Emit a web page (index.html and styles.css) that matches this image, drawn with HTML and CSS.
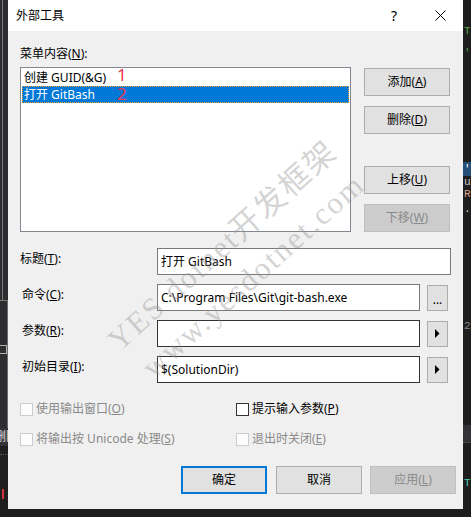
FILE: index.html
```html
<!DOCTYPE html>
<html lang="zh-CN">
<head>
<meta charset="utf-8">
<title>外部工具</title>
<link rel="stylesheet" href="styles.css">
</head>
<body>
<div class="screen">
  <div class="edge-left">
    <div class="el-top"><div class="el-line"></div></div>
    <div class="el-mid"><div class="el-hline"></div><div class="el-box"></div></div>
    <div class="el-label">删除</div>
    <div class="el-bottom"><div class="el-dots"></div><div class="el-red"></div></div>
  </div>

  <div class="dialog">
    <div class="titlebar">
      <span class="title">外部工具</span>
      <span class="help">?</span>
      <span class="close">
        <svg width="11" height="11" viewBox="0 0 11 11"><path d="M0.5 0.5 L10.5 10.5 M10.5 0.5 L0.5 10.5" stroke="#000" stroke-width="1" fill="none"/></svg>
      </span>
    </div>

    <div class="content">
      <div class="label-top">菜单内容(<u>N</u>):</div>

      <div class="list-row">
        <div class="listbox">
          <div class="item">创建 GUID(&amp;G)</div>
          <div class="item selected">打开 GitBash</div>
          <span class="mark m1">1</span>
          <span class="mark m2">2</span>
        </div>
        <div class="side-buttons">
          <button class="btn">添加(<u>A</u>)</button>
          <button class="btn b2">删除(<u>D</u>)</button>
          <button class="btn b3">上移(<u>U</u>)</button>
          <button class="btn b4 disabled">下移(<u>W</u>)</button>
        </div>
      </div>

      <div class="form">
        <div class="row">
          <label class="lbl first">标题(<u>T</u>):</label>
          <div class="input wide">打开 GitBash</div>
        </div>
        <div class="row">
          <label class="lbl">命令(<u>C</u>):</label>
          <div class="input narrow">C:\Program Files\Git\git-bash.exe</div>
          <button class="mini dots">...</button>
        </div>
        <div class="row">
          <label class="lbl">参数(<u>R</u>):</label>
          <div class="input narrow dark"></div>
          <button class="mini"><svg width="5" height="9" viewBox="0 0 5 9"><path d="M0 0 L4.5 4.5 L0 9 Z" fill="#000"/></svg></button>
        </div>
        <div class="row">
          <label class="lbl">初始目录(<u>I</u>):</label>
          <div class="input narrow dark">$(SolutionDir)</div>
          <button class="mini"><svg width="5" height="9" viewBox="0 0 5 9"><path d="M0 0 L4.5 4.5 L0 9 Z" fill="#000"/></svg></button>
        </div>
      </div>

      <div class="checks">
        <div class="check disabled"><span class="box"></span><span class="ctext">使用输出窗口(<u>O</u>)</span></div>
        <div class="check"><span class="box"></span><span class="ctext">提示输入参数(<u>P</u>)</span></div>
        <div class="check disabled"><span class="box"></span><span class="ctext">将输出按 Unicode 处理(<u>S</u>)</span></div>
        <div class="check disabled"><span class="box"></span><span class="ctext">退出时关闭(<u>E</u>)</span></div>
      </div>

      <div class="actions">
        <button class="btn default">确定</button>
        <button class="btn">取消</button>
        <button class="btn disabled">应用(<u>L</u>)</button>
      </div>
    </div>

    <div class="watermark">
      <span class="wm wm1">YES dotnet开发框架</span>
      <span class="wm wm2">www.yesdotnet.com</span>
    </div>
  </div>

  <div class="edge-right">
    <div class="code c-green s1">T</div>
    <div class="code c-green s2">'i</div>
    <div class="code c-hl s3">'i</div>
    <div class="code c-gray">ui</div>
    <div class="code c-orange">Re</div>
    <div class="code c-yellow s4">.E</div>
    <div class="code c-num s5">2</div>
    <div class="band s6"></div>
    <div class="code c-teal s7">T</div>
  </div>
</div>
<div class="bottom-band"></div>
</body>
</html>
```

FILE: styles.css
```css
* { box-sizing: border-box; }

body {
  margin: 0;
  background: #1e1e1e;
  font-family: "Noto Sans", "Noto Sans CJK SC", sans-serif;
  font-size: 12px;
  color: #000;
  overflow: hidden;
}

u { text-decoration: underline; text-underline-offset: 1px; }

.screen {
  display: flex;
  height: 509px;
}

/* ---------- left edge (IDE behind) ---------- */
.edge-left {
  width: 8px;
  display: flex;
  flex-direction: column;
  background: #2d2d30;
  overflow: hidden;
}
.el-top { height: 300px; padding-left: 2px; }
.el-line { width: 1px; height: 100%; background: #7a7a7a; }
.el-mid {
  height: 128px;
  border-right: 1px solid #6a6a6a;
  display: flex;
  flex-direction: column;
}
.el-hline { height: 1px; background: #7a7a7a; }
.el-box {
  margin-top: 44px;
  width: 7px;
  height: 9px;
  border: 1px solid #b0b0b0;
  border-left: none;
}
.el-label {
  height: 18px;
  background: #333337;
  color: #e0e0e0;
  font-size: 12px;
  line-height: 18px;
  white-space: nowrap;
  margin-left: -6px;
}
.el-bottom { flex: 1; background: #1e1e1e; }
.el-dots { height: 1px; margin-top: 8px; border-top: 1px dotted #555; }
.el-red { width: 2px; height: 10px; margin: 34px 0 0 2px; background: #d03040; }

/* ---------- right edge ---------- */
.edge-right {
  width: 8px;
  background: #1e1e1e;
  overflow: hidden;
  display: flex;
  flex-direction: column;
  font-family: "Liberation Mono", monospace;
  font-size: 11px;
  line-height: 12px;
  white-space: nowrap;
}
.code { height: 12px; padding-left: 1px; overflow: hidden; }
.s1 { margin-top: 25px; }
.s2 { margin-top: 10px; }
.s3 { margin-top: 103px; height: 14px; line-height: 14px; }
.s4 { margin-top: 3px; }
.s5 { margin-top: 105px; }
.s6 { margin-top: 93px; }
.s7 { margin-top: 34px; }
.c-green { color: #57a64a; }
.c-hl { background: #264f78; color: #ffffff; }
.c-gray { color: #c8c8c8; }
.c-orange { color: #d69d85; }
.c-yellow { color: #dcdcaa; }
.c-num { color: #8a8a8a; }
.c-teal { color: #4ec9b0; }
.band { height: 18px; background: #333337; border-bottom: 1px dotted #555; }

.bottom-band { height: 8px; background: #1e1e1e; }

/* ---------- dialog ---------- */
.dialog {
  width: 455px;
  background: #f0f0f0;
  position: relative;
  display: flex;
  flex-direction: column;
}

.titlebar {
  height: 31px;
  background: #ffffff;
  display: flex;
  align-items: center;
}
.title { flex: 1; padding-left: 8px; line-height: 16px; }
.help {
  width: 46px;
  text-align: center;
  font-size: 14px;
  line-height: 16px;
}
.close {
  width: 46px;
  display: flex;
  justify-content: center;
}

.content {
  padding: 15px 0 0 12px;
  display: flex;
  flex-direction: column;
}

.label-top { line-height: 16px; }

.list-row {
  display: flex;
  margin-top: 5px;
}

.listbox {
  position: relative;
  width: 331px;
  height: 165px;
  border: 1px solid #828790;
  background: #ffffff;
  padding: 1px;
}
.item {
  height: 17px;
  line-height: 17px;
  padding-left: 2px;
  white-space: nowrap;
}
.item.selected {
  background: #0078d7;
  color: #ffffff;
  outline: 1px dotted #f5a02a;
  outline-offset: -1px;
}
.mark {
  position: absolute;
  left: 96px;
  font-family: "Noto Sans", sans-serif;
  font-size: 17px;
  line-height: 1;
  color: #ee3650;
}
.m1 { top: -2px; }
.m2 { top: 17px; }

.side-buttons {
  display: flex;
  flex-direction: column;
  margin-left: 13px;
  padding-top: 1px;
}

.btn {
  width: 86px;
  height: 28px;
  border: 1px solid #adadad;
  background: #e1e1e1;
  font-family: inherit;
  font-size: 12px;
  color: #000;
  padding: 0;
  line-height: 16px;
}
.b2 { margin-top: 10px; }
.b3 { margin-top: 32px; }
.b4 { margin-top: 10px; }
.btn.disabled {
  background: #cccccc;
  border-color: #bfbfbf;
  color: #8a8a8a;
}
.btn.default { border: 2px solid #0078d7; }

/* ---------- form ---------- */
.form {
  margin-top: 16px;
  display: flex;
  flex-direction: column;
  gap: 9px;
}
.row {
  display: flex;
  align-items: center;
  height: 27px;
}
.lbl {
  width: 137px;
  align-self: flex-start;
  margin-top: 3px;
  line-height: 16px;
  padding-left: 2px;
}
.lbl.first { padding-left: 0; }

.input {
  height: 27px;
  border: 1px solid #7a7a7a;
  background: #ffffff;
  padding: 0 3px;
  line-height: 25px;
  white-space: nowrap;
  overflow: hidden;
}
.input.wide { width: 294px; }
.input.narrow { width: 263px; }
.input.dark { border-color: #333333; }

.mini {
  width: 21px;
  height: 26px;
  margin-left: 7px;
  border: 1px solid #adadad;
  background: #e1e1e1;
  padding: 0;
  display: flex;
  align-items: center;
  justify-content: center;
  font-family: inherit;
  font-size: 12px;
  color: #000;
}
.mini.dots { align-items: flex-end; padding-bottom: 5px; line-height: 10px; }

/* ---------- checkboxes ---------- */
.checks {
  margin-top: 18px;
  display: grid;
  grid-template-columns: 216px auto;
  grid-auto-rows: 16px;
  row-gap: 14px;
}
.check {
  display: flex;
  align-items: center;
  gap: 3px;
  line-height: 16px;
  white-space: nowrap;
}
.box {
  width: 13px;
  height: 13px;
  border: 1px solid #333333;
  background: #ffffff;
  flex: none;
}
.check.disabled { color: #8a8a8a; }
.check.disabled .box { border-color: #cccccc; background: #fcfcfc; }

/* ---------- bottom buttons ---------- */
.actions {
  margin-top: 19px;
  margin-right: 7px;
  display: flex;
  justify-content: flex-end;
  gap: 8px;
}
.actions .default { margin-right: 1px; }

/* ---------- watermark ---------- */
.watermark {
  position: absolute;
  inset: 0;
  pointer-events: none;
  overflow: hidden;
}
.wm {
  position: absolute;
  font-family: "Liberation Serif", "Noto Sans CJK SC", serif;
  font-size: 31px;
  line-height: 1;
  letter-spacing: 2px;
  white-space: nowrap;
  color: rgba(150, 150, 150, 0.42);
  transform: rotate(-42deg);
  transform-origin: 0 0;
}
.wm1 { left: 94px; top: 333px; }
.wm2 { left: 128px; top: 360px; }
```
